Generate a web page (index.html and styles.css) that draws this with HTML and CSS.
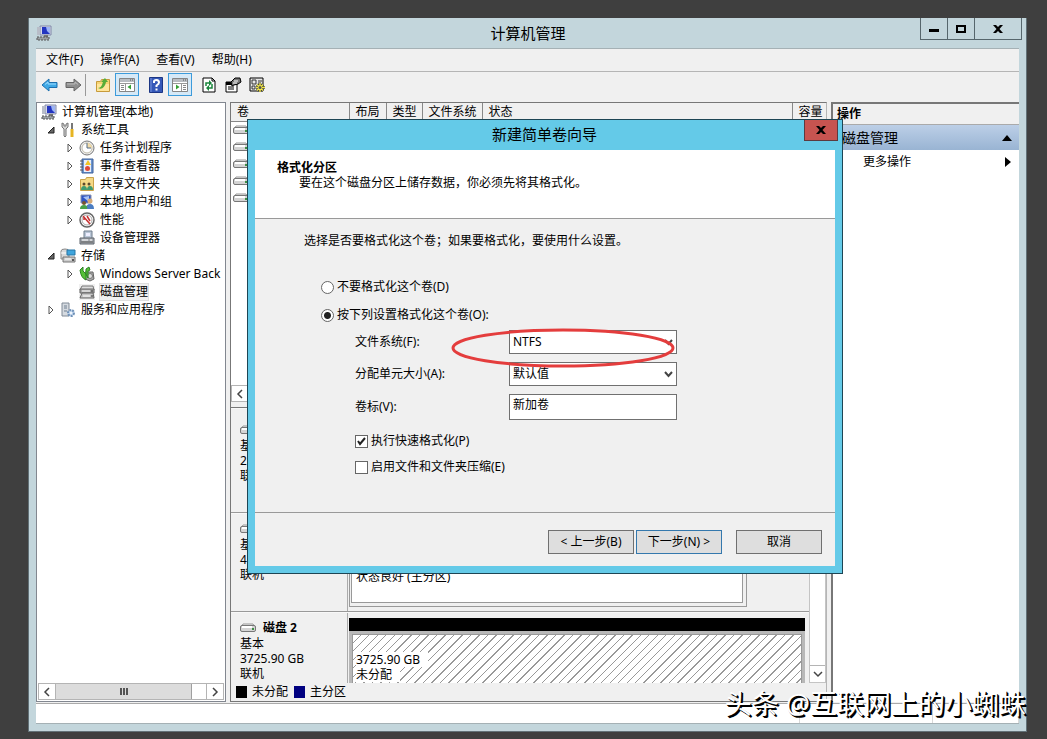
FILE: index.html
```html
<!DOCTYPE html>
<html lang="zh-CN">
<head>
    <meta charset="UTF-8">
    <meta name="viewport" content="width=device-width, initial-scale=1.0">
    <title>计算机管理</title>
    <link rel="stylesheet" href="styles.css">
</head>
<body>
    <!-- Shared icons -->
    <svg class="sprite" aria-hidden="true">
        <symbol id="i-computer" viewBox="0 0 16 16">
            <path d="M4 1h11v9H4z" fill="#d5d9ea" stroke="#8188a8"/>
            <path d="M6 2h8v7H6z" fill="#2335c0"/>
            <path d="M10 2h4v7l-3-3z" fill="#9db4f4"/>
            <path d="M1 2h3v8H1z" fill="#b8bdc8"/>
            <path d="M8 10h4v2H8z" fill="#777"/>
            <path d="M1 12h12v3H1z" fill="#9aa0a4" stroke="#555" stroke-dasharray="2 1"/>
        </symbol>
        <symbol id="i-drive" viewBox="0 0 16 10">
            <path d="M3 1h10l2 3H1z" fill="#eee" stroke="#999"/>
            <rect x=".5" y="2.5" width="15" height="6" rx="1.5" fill="#d4d4d4" stroke="#777"/>
            <path d="M2 4h10" stroke="#fff" stroke-width="2"/>
            <path d="M12 5h2v2h-2z" fill="#3d8f45"/>
        </symbol>
        <symbol id="i-open" viewBox="0 0 8 8"><path d="M7 1v6H1z" fill="#666" stroke="#222"/></symbol>
        <symbol id="i-closed" viewBox="0 0 8 10"><path d="M2 1l4 4-4 4z" fill="#fff" stroke="#555"/></symbol>
        <symbol id="i-left" viewBox="0 0 8 10"><path d="M6 1L2 5l4 4" fill="none" stroke="#444" stroke-width="1.5"/></symbol>
        <symbol id="i-right" viewBox="0 0 8 10"><path d="M2 1l4 4-4 4" fill="none" stroke="#444" stroke-width="1.5"/></symbol>
        <symbol id="i-down" viewBox="0 0 10 8"><path d="M1 2l4 4 4-4" fill="none" stroke="#444" stroke-width="1.5"/></symbol>
        <symbol id="i-x" viewBox="0 0 10 10"><path d="M0 1h3l2 2 2-2h3L6.5 5 10 9H7L5 7 3 9H0l3.5-4z" fill="#000"/></symbol>
    </svg>

    <div class="window">
        <header class="titlebar">
            <svg class="icon"><use href="#i-computer"/></svg>
            <h1>计算机管理</h1>
            <div class="window-buttons">
                <button aria-label="最小化"><svg width="10" height="10"><path d="M0 5h10v3H0z"/></svg></button>
                <button aria-label="最大化"><svg width="10" height="10"><path d="M1 2h8v6H1z" fill="none" stroke="#000" stroke-width="2"/></svg></button>
                <button class="wide" aria-label="关闭"><svg width="10" height="10"><use href="#i-x"/></svg></button>
            </div>
        </header>

        <div class="client">
            <nav class="menu">
                <button>文件(F)</button>
                <button>操作(A)</button>
                <button>查看(V)</button>
                <button>帮助(H)</button>
            </nav>

            <div class="toolbar">
                <button aria-label="后退"><svg width="17" height="16"><path d="M1 8l7-6v3.5h8v5H8V14z" fill="#3fa9e6" stroke="#1d6fae"/><path d="M4 7.5l3-2.5v2h8" fill="none" stroke="#9fdcff"/></svg></button>
                <button aria-label="前进"><svg width="17" height="16"><path d="M16 8L9 2v3.5H1v5h8V14z" fill="#8f8f8f" stroke="#666"/><path d="M2 7h8V5l3 2.5" fill="none" stroke="#bbb"/></svg></button>
                <span class="separator"></span>
                <button aria-label="上一级"><svg width="16" height="16"><path d="M1.5 4.5h4l1-2h8v12h-13z" fill="#f6d575" stroke="#c79b3b"/><path d="M2 7h12v7H2z" fill="#ffe59a"/><path d="M3 11c3 0 4-3 5-6H6l4-4 3 4h-2c-1 5-4 8-8 6z" fill="#58ad38"/></svg></button>
                <button class="on" aria-label="显示控制台树"><svg width="18" height="18"><path d="M1.5 2.5h15v13h-15z" fill="#fff" stroke="#858585"/><path d="M2 3h14v3H2z" fill="#b9bdc2"/><path d="M12 4h1m1 0h1" stroke="#555"/><path d="M2 7.5h14M7.5 7v8" stroke="#999"/><path d="M3 9.5h3m-3 2h3m-3 2h3" stroke="#888"/><path d="M13 8.5v5L9.5 11z" fill="#35a035"/></svg></button>
                <button class="gap" aria-label="帮助"><svg width="14" height="16"><path d="M.5.5h13v15H.5z" fill="#3558b8" stroke="#1c3684"/><path d="M2 1v14" stroke="#7894de"/><path d="M5 6V4.5Q5 3 7.5 3T10 5.5Q10 7 7.5 8.5V10m0 1.5v2" fill="none" stroke="#fff" stroke-width="2"/></svg></button>
                <button class="on" aria-label="显示操作窗格"><svg width="18" height="18"><path d="M1.5 2.5h15v13h-15z" fill="#fff" stroke="#858585"/><path d="M2 3h14v3H2z" fill="#b9bdc2"/><path d="M12 4h1m1 0h1" stroke="#555"/><path d="M2 7.5h14M10.5 7v8" stroke="#999"/><path d="M12 9.5h3m-3 2h3m-3 2h3" stroke="#888"/><path d="M5 8.5v5L8.5 11z" fill="#35a035"/></svg></button>
                <button class="gap" aria-label="刷新"><svg width="14" height="16"><path d="M1 1h9l3 3v11H1z" fill="#fff" stroke="#000"/><path d="M10 1v3h3" fill="none" stroke="#000"/><path d="M4 9V6h5M10 7v4H5" fill="none" stroke="#17853a" stroke-width="1.5"/><path d="M7 3v6l3-3zM7 8v6l-3-3z" fill="#17853a"/></svg></button>
                <button aria-label="属性"><svg width="17" height="16"><path d="M1 5h11v10H1z" fill="#fff" stroke="#000"/><path d="M1 5h11v3H1z"/><path d="M3 10h6m-6 2h6" stroke="#000"/><path d="M6 5l4-4h5l1 4-3 2-4 1-2 1z" fill="#777" stroke="#000"/><path d="M9 4h4m-5 2h4" stroke="#fff"/></svg></button>
                <button aria-label="设置"><svg width="17" height="16"><path d="M1 1h13v13H1z" fill="#e8e8e8" stroke="#000"/><path d="M3 3h4v4H3zM3 9h3v3H3z" fill="none" stroke="#333"/><path d="M9 4h4M9 6h3" stroke="#333"/><path d="M11 6v9M7 10.5h9M8 7.5l6 6M14 7.5l-6 6" stroke="#333" stroke-width="2.5"/><path d="M11 6v9M7 10.5h9M8 7.5l6 6M14 7.5l-6 6" stroke="#f2e84b" stroke-width="1.5"/><circle cx="11" cy="10.5" r="1.5" fill="#555"/></svg></button>
            </div>

            <main class="panes">
                <section class="tree-pane">
                    <ul class="tree">
                        <li><svg class="icon"><use href="#i-computer"/></svg><span>计算机管理(本地)</span></li>
                        <li class="level-1"><svg class="twist"><use href="#i-open"/></svg>
                            <svg class="icon" viewBox="0 0 16 16"><path d="M2 1v4l2 2v7q1 2 2 0V7l2-2V1L6 2v2H4V2z" fill="#d5d5d5" stroke="#777"/><path d="M12 1v6" stroke="#777" stroke-width="2"/><path d="M12 7v8" stroke="#e6b422" stroke-width="3"/></svg><span>系统工具</span></li>
                        <li class="level-2"><svg class="twist"><use href="#i-closed"/></svg>
                            <svg class="icon" viewBox="0 0 16 16"><circle cx="8" cy="8" r="7" fill="#eee" stroke="#777"/><circle cx="8" cy="8" r="5" fill="#fff" stroke="#c1bba9"/><path d="M8 8V3a5 5 0 0 1 5 5z" fill="#f2dca8"/><path d="M8 3v5h4" fill="none" stroke="#526a88"/></svg><span>任务计划程序</span></li>
                        <li class="level-2"><svg class="twist"><use href="#i-closed"/></svg>
                            <svg class="icon" viewBox="0 0 16 16"><path d="M3 1h11v14H3z" fill="#6d94cf" stroke="#3d619a"/><path d="M5 2h7v12H5z" fill="#e9effa"/><path d="M1 3h3M1 6h3M1 9h3M1 12h3" stroke="#555"/><path d="M9 2l3 5H6z" fill="#f2c526"/><circle cx="8.5" cy="10.5" r="2.5" fill="#df4938"/></svg><span>事件查看器</span></li>
                        <li class="level-2"><svg class="twist"><use href="#i-closed"/></svg>
                            <svg class="icon" viewBox="0 0 16 16"><path d="M1.5 3.5h5l1-2h7v13h-13z" fill="#f5d986" stroke="#c9a24a"/><circle cx="5" cy="8" r="1.5" fill="#5d4a2d"/><circle cx="10" cy="8" r="1.5" fill="#5d4a2d"/><path d="M2 14q0-4 3-4t3 4zm6 0q0-4 3-4t3 4z" fill="#3f9a70"/></svg><span>共享文件夹</span></li>
                        <li class="level-2"><svg class="twist"><use href="#i-closed"/></svg>
                            <svg class="icon" viewBox="0 0 16 16"><path d="M2 1h10v8H2z" fill="#2f55c4" stroke="#8992ad"/><path d="M4 3l6 5V2z" fill="#a7c0f5"/><circle cx="11" cy="7" r="2.5" fill="#d6aa76"/><circle cx="5" cy="9" r="2" fill="#765430"/><path d="M7 15q0-5 4-5t4 5z" fill="#4b7dc2"/><path d="M1 15q0-4 4-4t3 4z" fill="#47a04a"/></svg><span>本地用户和组</span></li>
                        <li class="level-2"><svg class="twist"><use href="#i-closed"/></svg>
                            <svg class="icon" viewBox="0 0 16 16"><circle cx="8" cy="8" r="7" fill="#fff" stroke="#666" stroke-width="1.5"/><circle cx="8" cy="8" r="5" fill="none" stroke="#aaa"/><path d="M4 4l7 8M8 4l3 5M5 8V5" stroke="#c83030" stroke-width="1.5"/></svg><span>性能</span></li>
                        <li class="level-2"><span class="twist"></span>
                            <svg class="icon" viewBox="0 0 16 16"><path d="M5 1h8v8H5z" fill="#b9c6d6" stroke="#6f7c8c"/><path d="M7 3h4v3H7z" fill="#eef"/><path d="M1 8h14v6H1z" fill="#a8adb3" stroke="#5e656c"/><path d="M3 10h6m2 0h2" stroke="#fff"/><path d="M2 12h12" stroke="#555"/></svg><span>设备管理器</span></li>
                        <li class="level-1"><svg class="twist"><use href="#i-open"/></svg>
                            <svg class="icon" viewBox="0 0 16 16"><path d="M1 3q0-2 4-2t4 2v8H1z" fill="#d9d9d9" stroke="#888"/><path d="M7 2h8v5H7z" fill="#3fa5dd" stroke="#2876a6"/><path d="M3 9h12v5H3z" fill="#ccc" stroke="#777"/><path d="M1 5h5M5 11h6" stroke="#fff"/><path d="M12 11h2v2h-2z" fill="#555"/></svg><span>存储</span></li>
                        <li class="level-2"><svg class="twist"><use href="#i-closed"/></svg>
                            <svg class="icon" viewBox="0 0 16 16"><path d="M6 6h8l1 7-4 2-5-2z" fill="#aaa" stroke="#666"/><circle cx="11" cy="10" r="2.5" fill="#ddd" stroke="#777"/><path d="M1 4l3-3v4l3 3v6q-5-2-6-10zM7 3l3-2 1 3-2 1v7q-3-3-2-9z" fill="#55c038" stroke="#2d8325"/></svg><span>Windows Server Back</span></li>
                        <li class="level-2 selected"><span class="twist"></span>
                            <svg class="icon" viewBox="0 0 16 16"><path d="M3 2h11l1 4H1z" fill="#ddd" stroke="#777"/><path d="M1 5h14v4H1z" fill="#a9a9a9" stroke="#666"/><path d="M3 9h11l1 5H1z" fill="#c5c5c5" stroke="#666"/><path d="M3 7h8M4 12h7" stroke="#fff"/><path d="M12 7h2M12 12h2" stroke="#333"/></svg><span>磁盘管理</span></li>
                        <li class="level-1"><svg class="twist"><use href="#i-closed"/></svg>
                            <svg class="icon" viewBox="0 0 16 16"><path d="M2 1h7v13H2z" fill="#d5dae0" stroke="#808a96"/><path d="M4 4h3M4 6h3M4 9h3" stroke="#718091"/><circle cx="11" cy="11" r="3" fill="#c3d7ee" stroke="#6f91b8" stroke-width="2" stroke-dasharray="2 1"/><circle cx="11" cy="11" r="1" fill="#fff"/></svg><span>服务和应用程序</span></li>
                    </ul>
                    <div class="hscroll">
                        <button aria-label="向左滚动"><svg width="8" height="10"><use href="#i-left"/></svg></button>
                        <span class="thumb"><i></i></span>
                        <button aria-label="向右滚动"><svg width="8" height="10"><use href="#i-right"/></svg></button>
                    </div>
                </section>

                <section class="disk-pane">
                    <div class="volumes">
                        <table>
                            <thead>
                                <tr>
                                    <th class="c-volume">卷</th>
                                    <th class="c-layout">布局</th>
                                    <th class="c-type">类型</th>
                                    <th class="c-fs">文件系统</th>
                                    <th>状态</th>
                                    <th class="c-size">容量</th>
                                </tr>
                            </thead>
                            <tbody>
                                <tr><td colspan="6"><svg class="drive"><use href="#i-drive"/></svg></td></tr>
                                <tr><td colspan="6"><svg class="drive"><use href="#i-drive"/></svg></td></tr>
                                <tr><td colspan="6"><svg class="drive"><use href="#i-drive"/></svg></td></tr>
                                <tr><td colspan="6"><svg class="drive"><use href="#i-drive"/></svg></td></tr>
                                <tr><td colspan="6"><svg class="drive"><use href="#i-drive"/></svg></td></tr>
                            </tbody>
                        </table>
                        <div class="hscroll">
                            <button aria-label="向左滚动"><svg width="8" height="10"><use href="#i-left"/></svg></button>
                        </div>
                    </div>

                    <div class="disk-view">
                        <div class="disks">
                            <div class="disk">
                                <div class="disk-label">
                                    <strong><svg class="drive"><use href="#i-drive"/></svg></strong>
                                    <span>基本</span><span>2</span><span>联机</span>
                                </div>
                            </div>
                            <div class="disk">
                                <div class="disk-label">
                                    <strong><svg class="drive"><use href="#i-drive"/></svg></strong>
                                    <span>基本</span><span>4</span><span>联机</span>
                                </div>
                                <div class="partition-frame">
                                    <div class="partition">状态良好 (主分区)</div>
                                </div>
                            </div>
                            <div class="disk">
                                <div class="disk-label">
                                    <strong><svg class="drive"><use href="#i-drive"/></svg>磁盘 2</strong>
                                    <span>基本</span><span>3725.90 GB</span><span>联机</span>
                                </div>
                                <div class="unallocated">
                                    <div class="hatch"><span>3725.90 GB</span><span>未分配</span></div>
                                </div>
                            </div>
                        </div>
                        <div class="vscroll">
                            <button aria-label="向下滚动"><svg width="10" height="8"><use href="#i-down"/></svg></button>
                        </div>
                    </div>

                    <div class="legend">
                        <span><i class="swatch black"></i>未分配</span>
                        <span><i class="swatch navy"></i>主分区</span>
                    </div>
                </section>

                <aside class="actions">
                    <h2>操作</h2>
                    <button class="group">磁盘管理<svg width="10" height="6"><path d="M5 0l5 6H0z"/></svg></button>
                    <button class="more">更多操作<svg width="6" height="10"><path d="M0 0l6 5-6 5z"/></svg></button>
                </aside>
            </main>

            <footer class="status"><span></span><span></span><span></span></footer>
        </div>
    </div>

    <form class="dialog" role="dialog" aria-labelledby="dialogTitle">
        <div class="dialog-title">
            <h2 id="dialogTitle">新建简单卷向导</h2>
            <button type="button" class="close" aria-label="关闭"><svg width="10" height="10"><use href="#i-x"/></svg></button>
        </div>
        <div class="dialog-head">
            <h3>格式化分区</h3>
            <p>要在这个磁盘分区上储存数据，你必须先将其格式化。</p>
        </div>
        <div class="dialog-body">
            <p>选择是否要格式化这个卷；如果要格式化，要使用什么设置。</p>
            <div class="choices">
                <label><input type="radio" name="format">不要格式化这个卷(D)</label>
                <label><input type="radio" name="format" checked>按下列设置格式化这个卷(O):</label>
            </div>
            <div class="fields">
                <label for="fs">文件系统(F):</label>
                <select id="fs"><option>NTFS</option></select>
                <label for="unit">分配单元大小(A):</label>
                <select id="unit"><option>默认值</option></select>
                <label for="volume">卷标(V):</label>
                <input type="text" id="volume" value="新加卷">
            </div>
            <div class="checks">
                <label><input type="checkbox" checked>执行快速格式化(P)</label>
                <label><input type="checkbox">启用文件和文件夹压缩(E)</label>
            </div>
            <svg class="marker" viewBox="0 0 226 40" aria-hidden="true"><ellipse cx="113" cy="20" rx="110" ry="18"/></svg>
        </div>
        <div class="dialog-buttons">
            <button type="button">&lt; 上一步(B)</button>
            <button type="submit" class="default">下一步(N) &gt;</button>
            <button type="button" class="cancel">取消</button>
        </div>
    </form>

    <div class="watermark">头条 @互联网上的小蜘蛛</div>
</body>
</html>
```
FILE: styles.css
```css
/* Global Styles */
* {
    box-sizing: border-box;
}

body {
    position: relative;
    margin: 0;
    padding: 18px 20px 7px 28px;
    min-height: 100vh;
    display: flex;
    background: #3f3f3f;
    color: #000;
    font-family: "Noto Sans", "Noto Sans CJK SC", sans-serif;
    font-size: 12px;
    line-height: 16px;
}

h1, h2, h3, p, ul {
    margin: 0;
    padding: 0;
    font-weight: normal;
}

button, input, select {
    font: inherit;
    color: inherit;
    margin: 0;
    padding: 0;
    border: 0;
    border-radius: 0;
    background: none;
}

svg {
    display: block;
    flex: none;
}

.sprite {
    position: absolute;
    width: 0;
    height: 0;
}

.icon {
    width: 16px;
    height: 16px;
}

.drive {
    width: 16px;
    height: 10px;
}

/* Main Window */
.window {
    flex: 1;
    display: flex;
    flex-direction: column;
    min-width: 0;
    padding: 0 7px 7px;
    background: #c3d6dc;
    border: 1px solid #627177;
    border-top: 0;
}

.titlebar {
    display: grid;
    grid-template-columns: 100px 1fr 102px;
    height: 30px;
    margin-right: -3px;
    align-items: center;
}

.titlebar h1 {
    font-size: 15px;
    line-height: 20px;
    text-align: center;
}

.window-buttons {
    display: flex;
    align-self: start;
    border: 1px solid #56666c;
    border-top: 0;
}

.window-buttons button {
    width: 27px;
    height: 21px;
    display: flex;
    align-items: center;
    justify-content: center;
    border-right: 1px solid #56666c;
}

.window-buttons .wide {
    flex: 1;
    border-right: 0;
}

.client {
    flex: 1;
    display: flex;
    flex-direction: column;
    background: #f0f0f0;
    border: solid #a5b1b5;
    border-width: 1px 0;
}

.menu {
    display: flex;
    gap: 17px;
    padding: 3px 10px;
    border-bottom: 1px solid #b5b5b5;
}

.toolbar {
    display: flex;
    align-items: center;
    height: 30px;
    padding: 0 1px 5px;
}

.toolbar button {
    width: 24px;
    height: 23px;
    display: flex;
    align-items: center;
    justify-content: center;
}

.toolbar .on {
    background: #d6e9f7;
    border: 1px solid #3c9bdb;
}

.toolbar .gap {
    margin-left: 5px;
}

.separator {
    width: 1px;
    height: 22px;
    margin-right: 5px;
    background: #999;
}

.panes {
    flex: 1;
    display: grid;
    grid-template-columns: 190px 1fr 188px;
    gap: 4px;
}

/* Console Tree */
.tree-pane {
    display: flex;
    flex-direction: column;
    justify-content: space-between;
    min-width: 0;
    padding: 0 1px 1px;
    background: #fff;
    border: 1px solid #828790;
}

.tree {
    list-style: none;
    overflow: hidden;
}

.tree li {
    display: flex;
    align-items: center;
    height: 18px;
    padding-left: 3px;
    gap: 5px;
    white-space: nowrap;
}

.tree .level-1 {
    padding-left: 9px;
}

.tree .level-2 {
    padding-left: 28px;
}

.twist {
    flex: none;
    width: 8px;
    height: 10px;
}

.selected .icon,
.selected span:last-child {
    background: #f0f0f0;
}

.selected span:last-child {
    outline: 1px solid #dedede;
}

.hscroll {
    display: flex;
    height: 17px;
    background: #fff;
    border: 1px solid #b4b4b4;
}

.hscroll button {
    width: 17px;
    display: flex;
    align-items: center;
    justify-content: center;
    border-right: 1px solid #b4b4b4;
}

.hscroll .thumb + button {
    margin-left: auto;
    border-right: 0;
    border-left: 1px solid #b4b4b4;
}

.thumb {
    width: 74%;
    display: flex;
    align-items: center;
    justify-content: center;
    background: #dcdcdc;
    border-right: 1px solid #a0a0a0;
}

.thumb i {
    width: 8px;
    height: 7px;
    background: repeating-linear-gradient(90deg, #555 0 2px, transparent 2px 3px);
}

/* Volume List and Disk View */
.disk-pane {
    display: flex;
    flex-direction: column;
    min-width: 0;
    border: 1px solid #777;
    border-right-color: #b5b5b5;
}

.volumes {
    flex: none;
    height: 299px;
    display: flex;
    flex-direction: column;
    justify-content: space-between;
    background: #fff;
}

.volumes table {
    width: 100%;
    table-layout: fixed;
    border-collapse: collapse;
}

.volumes th {
    height: 18px;
    padding: 1px 0 0 6px;
    background: #f0f0f0;
    border-right: 1px solid #888;
    border-bottom: 1px solid #888;
    font-weight: normal;
    text-align: left;
    white-space: nowrap;
}

.volumes td {
    height: 17px;
    padding: 0 2px;
}

.c-volume { width: 118px; }
.c-layout { width: 37px; }
.c-type { width: 36px; }
.c-fs { width: 60px; }
.volumes .c-size { width: 34px; border-right: 0; }

.disk-view {
    flex: 1 0 240px;
    display: flex;
    min-height: 0;
    border-top: 1px solid #777;
    margin-top: 5px;
}

/* The last disk is cut off by the scroll area */
.disks {
    flex: 1;
    height: 0;
    min-height: 100%;
    overflow: hidden;
}

.disk {
    display: flex;
    height: 99px;
    border-top: 1px solid #f8f8f8;
    border-bottom: 1px solid #999;
}

.disk:first-child {
    height: 105px;
    padding-top: 6px;
}

.disk-label {
    flex: none;
    width: 117px;
    padding: 6px 9px;
    display: flex;
    flex-direction: column;
    line-height: 15px;
    border-right: 1px solid #aaa;
}

.disk-label strong {
    display: flex;
    align-items: center;
    gap: 7px;
    height: 17px;
}

.partition-frame {
    flex: 1;
    margin: 0 62px 4px 1px;
    padding: 0 3px 3px 1px;
    display: flex;
    border: 1px solid #999;
}

.partition {
    flex: 1;
    display: flex;
    align-items: flex-end;
    padding: 0 4px 17px;
    background: #fff;
    border: 1px solid #999;
}

.unallocated {
    flex: 1;
    margin: 5px 4px 0 1px;
    border-top: 13px solid #000;
    padding: 3px 3px 0;
    background: #b8b8b8;
}

.hatch {
    height: 100%;
    display: flex;
    flex-direction: column;
    align-items: flex-start;
    padding: 17px 3px 0;
    line-height: 15px;
    border: 1px solid #999;
    background: repeating-linear-gradient(135deg, #fff 0 5px, #999 5px 6px);
}

.hatch span {
    background: #fff;
    padding-right: 8px;
}

.vscroll {
    width: 17px;
    display: flex;
    flex-direction: column;
    justify-content: flex-end;
    background: #fff;
    border: 1px solid #c4c4c4;
}

.vscroll button {
    height: 17px;
    display: flex;
    align-items: center;
    justify-content: center;
    border-top: 1px solid #b4b4b4;
}

.legend {
    display: flex;
    gap: 6px;
    height: 18px;
    padding: 0 5px;
}

.legend span {
    display: flex;
    align-items: center;
    gap: 5px;
}

.swatch {
    width: 11px;
    height: 12px;
}

.black { background: #000; }
.navy { background: #000080; }

/* Actions Pane */
.actions {
    display: flex;
    flex-direction: column;
    background: #fff;
    border: solid #777;
    border-width: 2px 0 0 2px;
}

.actions h2 {
    height: 21px;
    padding: 2px 4px;
    background: #f0f0f0;
    border-bottom: 1px solid #aaa;
    font-size: 12px;
    font-weight: bold;
}

.actions button {
    display: flex;
    align-items: center;
    justify-content: space-between;
    text-align: left;
}

.actions .group {
    height: 25px;
    padding: 0 7px 0 9px;
    background: linear-gradient(#bccfe7, #99b4d3);
    font-size: 14px;
}

.actions .more {
    height: 24px;
    padding: 0 8px 0 30px;
}

.status {
    display: grid;
    grid-template-columns: 1fr 133px 86px;
    height: 20px;
    margin-top: 1px;
    background: #fff;
    border-top: 1px solid #aaa;
}

.status span {
    border-right: 1px solid #d8d8d8;
}

/* Wizard Dialog */
.dialog {
    position: absolute;
    left: 247px;
    top: 119px;
    width: 596px;
    padding: 0 7px 7px;
    background: #64cae8;
    border: 1px solid #1d4554;
}

.dialog-title {
    display: grid;
    grid-template-columns: 30px 1fr 34px;
    height: 30px;
    margin-right: -3px;
}

.dialog-title h2 {
    grid-column: 2;
    font-size: 15px;
    line-height: 28px;
    text-align: center;
}

.close {
    height: 21px;
    display: flex;
    align-items: center;
    justify-content: center;
    background: #c75450;
    border: 1px solid #5c3a40;
    border-top: 0;
}

.dialog-head {
    height: 69px;
    padding: 10px 22px;
    background: #fff;
    border-bottom: 1px solid #999;
    line-height: 15px;
}

.dialog-head h3 {
    font-size: 12px;
    font-weight: bold;
}

.dialog-head p {
    padding-left: 22px;
}

.dialog-body {
    position: relative;
    height: 294px;
    padding: 14px 49px;
    background: #f0f0f0;
    border-bottom: 1px solid #999;
}

.choices,
.checks {
    display: flex;
    flex-direction: column;
    align-items: flex-start;
    gap: 12px;
}

.choices {
    padding: 30px 0 0 17px;
}

.choices label,
.checks label {
    display: flex;
    align-items: center;
    gap: 3px;
}

.checks {
    gap: 10px;
    padding: 13px 0 0 51px;
}

input[type="radio"],
input[type="checkbox"] {
    appearance: none;
    width: 13px;
    height: 13px;
    background: #fff;
    border: 1px solid #666;
}

input[type="radio"] {
    border-radius: 50%;
}

input[type="radio"]:checked {
    background: radial-gradient(circle, #222 0 3px, #fff 4px);
}

input[type="checkbox"]:checked {
    background: #fff url("data:image/svg+xml,%3Csvg xmlns='http://www.w3.org/2000/svg' viewBox='0 0 11 11'%3E%3Cpath d='M2 5l2 3 5-6' fill='none' stroke='%23222' stroke-width='2'/%3E%3C/svg%3E");
}

.fields {
    display: grid;
    grid-template-columns: 154px 168px;
    row-gap: 8px;
    align-items: center;
    padding: 7px 0 0 51px;
}

.fields select,
.fields input {
    height: 24px;
    padding: 0 3px;
    background: #fff;
    border: 1px solid #707070;
}

.fields select {
    appearance: none;
    background: #fff url("data:image/svg+xml,%3Csvg xmlns='http://www.w3.org/2000/svg' width='9' height='7'%3E%3Cpath d='M1 1l3.5 4L8 1' fill='none' stroke='%23444' stroke-width='2'/%3E%3C/svg%3E") no-repeat right 3px center;
}

.fields input {
    height: 26px;
    padding-bottom: 6px;
}

/* Hand drawn ring around the file system box */
.marker {
    position: absolute;
    left: 195px;
    top: 109px;
    width: 226px;
    height: 40px;
}

.marker ellipse {
    fill: none;
    stroke: #e43d3d;
    stroke-width: 3px;
}

.dialog-buttons {
    display: flex;
    justify-content: flex-end;
    gap: 2px;
    padding: 17px 13px 12px;
    background: #f0f0f0;
}

.dialog-buttons button {
    width: 86px;
    height: 24px;
    background: #dedede;
    border: 1px solid #707070;
}

.dialog-buttons .default {
    border-color: #3478ad;
}

.dialog-buttons .cancel {
    margin-left: 12px;
}

.watermark {
    position: absolute;
    right: 21px;
    bottom: 16px;
    font-size: 27px;
    line-height: 38px;
    color: #fff;
    text-shadow: 1px 1px 0 #000, 2px 2px 0 #000;
    white-space: nowrap;
}
```
